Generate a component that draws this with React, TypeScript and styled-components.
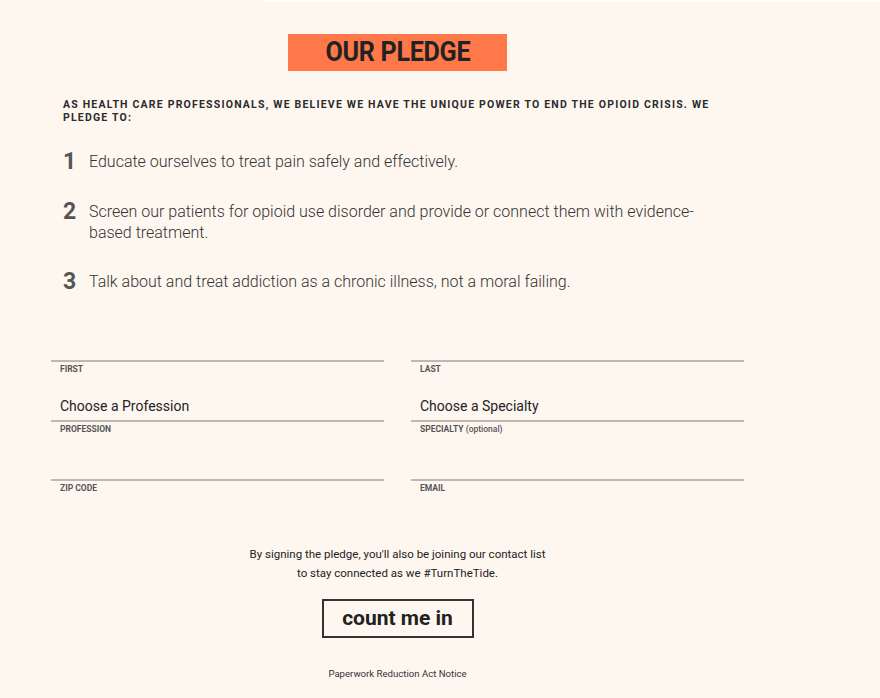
import React from "react"
import styled, { createGlobalStyle } from "styled-components"

const pledges = [
    "Educate ourselves to treat pain safely and effectively.",
    "Screen our patients for opioid use disorder and provide or connect them with evidence-based treatment.",
    "Talk about and treat addiction as a chronic illness, not a moral failing.",
]

const fields = [
    { label: "FIRST", value: "" },
    { label: "LAST", value: "" },
    { label: "PROFESSION", value: "Choose a Profession" },
    { label: "SPECIALTY", extra: "(optional)", value: "Choose a Specialty" },
    { label: "ZIP CODE", value: "" },
    { label: "EMAIL", value: "" },
]

export default function App() {
    return (
        <Page>
            <GlobalStyles />
            <TopStrip />
            <Container>
                <Heading>
                    <HeadingText>OUR PLEDGE</HeadingText>
                </Heading>
                <Intro>
                    As health care professionals, we believe we have the unique power to end the opioid crisis. We pledge to:
                </Intro>
                <List>
                    {pledges.map((p, i) => (
                        <Item key={i}>
                            <Num>{i + 1}</Num>
                            <ItemText>{p}</ItemText>
                        </Item>
                    ))}
                </List>
                <Form>
                    {fields.map((f) => (
                        <Field key={f.label}>
                            <Input>{f.value}</Input>
                            <Label>
                                {f.label}
                                {f.extra && <Optional> {f.extra}</Optional>}
                            </Label>
                        </Field>
                    ))}
                </Form>
                <Notice>
                    By signing the pledge, you'll also be joining our contact list
                    <br />
                    to stay connected as we #TurnTheTide.
                </Notice>
                <SubmitButton>count me in</SubmitButton>
                <SmallPrint>Paperwork Reduction Act Notice</SmallPrint>
            </Container>
        </Page>
    )
}

const Page = styled.div`
    min-height: 698px;
    background-color: #fef7f0;
`
const TopStrip = styled.div`
    height: 2px;
    margin-left: 264px;
    background-color: #ffffff;
`
const Container = styled.div`
    width: 693px;
    margin: 0 0 0 51px;
    display: flex;
    flex-direction: column;
    align-items: center;
    padding-top: 32px;
`
const Heading = styled.h1`
    width: 219px;
    height: 37px;
    background-color: #ff7849;
    display: flex;
    align-items: center;
    justify-content: center;
`
const HeadingText = styled.span`
    display: inline-block;
    color: #222222;
    font-family: Roboto, sans-serif;
    font-weight: 700;
    font-size: 27px;
    line-height: 37px;
    letter-spacing: -0.3px;
    transform: scaleX(0.93);
`
const Intro = styled.p`
    align-self: stretch;
    margin-top: 27px;
    padding: 0 12px;
    font-family: Roboto, sans-serif;
    font-weight: 700;
    font-size: 10.5px;
    line-height: 13px;
    letter-spacing: 1.2px;
    text-transform: uppercase;
    color: #2b2b2b;
    max-width: 680px;
`
const List = styled.ol`
    align-self: stretch;
    list-style: none;
    margin-top: 27px;
    padding: 0 12px;
    display: flex;
    flex-direction: column;
    gap: 28px;
`
const Item = styled.li`
    display: flex;
    align-items: flex-start;
`
const Num = styled.span`
    width: 26px;
    flex: none;
    font-family: Roboto, sans-serif;
    font-weight: 700;
    font-size: 23px;
    line-height: 22px;
    color: #555555;
`
const ItemText = styled.span`
    max-width: 620px;
    font-family: Roboto, sans-serif;
    font-weight: 300;
    font-size: 16px;
    line-height: 21px;
    color: #333333;
`
const Form = styled.div`
    align-self: stretch;
    margin-top: 22px;
    display: grid;
    grid-template-columns: 333px 333px;
    column-gap: 27px;
`
const Field = styled.div`
    display: flex;
    flex-direction: column;
    height: 59.5px;
`
const Input = styled.div`
    height: 47px;
    border-bottom: 2px solid #bdb8b2;
    padding: 0 9px 6px;
    display: flex;
    align-items: flex-end;
    font-family: Roboto, sans-serif;
    font-size: 14px;
    color: #222222;
`
const Label = styled.div`
    padding: 2px 9px 0;
    font-family: Roboto, sans-serif;
    font-weight: 700;
    font-size: 8.5px;
    color: #555555;
`
const Optional = styled.span`
    font-weight: 500;
`
const Notice = styled.p`
    margin-top: 51px;
    font-family: Roboto, sans-serif;
    font-size: 11.5px;
    line-height: 19px;
    color: #222222;
    text-align: center;
`
const SubmitButton = styled.button`
    margin-top: 16px;
    width: 152px;
    height: 39px;
    border: 2px solid #333333;
    background: transparent;
    font-family: Roboto, sans-serif;
    font-weight: 700;
    font-size: 21px;
    color: #222222;
    cursor: pointer;
`
const SmallPrint = styled.p`
    margin-top: 30px;
    font-family: Roboto, sans-serif;
    font-size: 9.6px;
    color: #333333;
`
const GlobalStyles = createGlobalStyle`
    *,
    *::before,
    *::after {
        margin: 0;
        padding: 0;
        box-sizing: border-box;
    }
    body {
        background-color: #fef7f0;
        -webkit-font-smoothing: antialiased;
    }
`
